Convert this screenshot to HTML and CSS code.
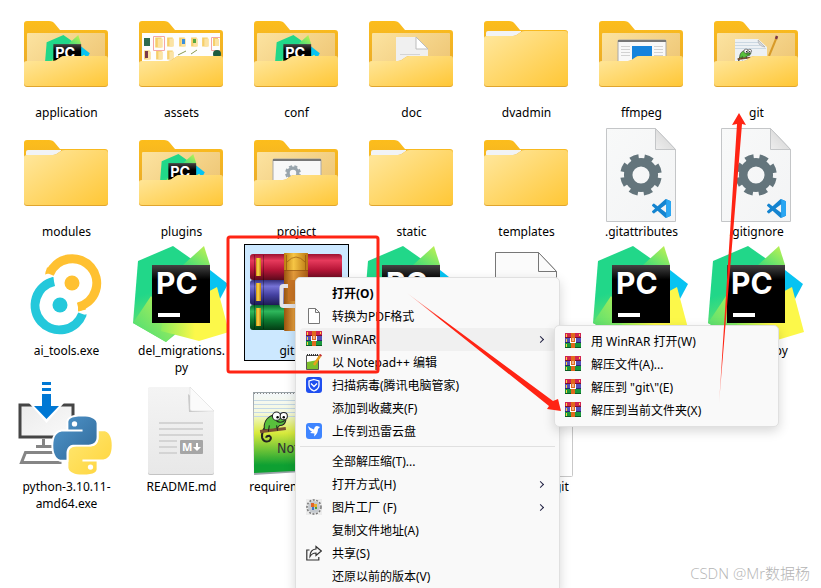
FILE: index.html
```html
<!DOCTYPE html>
<html lang="zh-CN"><head>
  <meta charset="UTF-8"/>
  <meta name="viewport" content="width=device-width,initial-scale=1"/>
  <title>git</title>
  <link rel="stylesheet" href="styles.css">
</head><body>

<!-- shared icon shapes -->
<svg class="sprite" aria-hidden="true">
  <defs>
    <linearGradient id="g-back" x1="0" y1="0" x2="0" y2="1"><stop offset="0" stop-color="#fcbd1c"/><stop offset="1" stop-color="#e8a92c"/></linearGradient>
    <linearGradient id="g-inner" x1="0" y1="0" x2="1" y2="0.6"><stop offset="0" stop-color="#fce3a0"/><stop offset="1" stop-color="#efc878"/></linearGradient>
    <linearGradient id="g-front" x1="0" y1="0" x2="1" y2="1"><stop offset="0" stop-color="#ffe8a0"/><stop offset="1" stop-color="#ffc736"/></linearGradient>
    <linearGradient id="g-page" x1="0" y1="0" x2="1" y2="1"><stop offset="0" stop-color="#f8f9f9"/><stop offset="1" stop-color="#f3f4f5"/></linearGradient>
    <linearGradient id="g-fold" x1="0" y1="1" x2="1" y2="0"><stop offset="0" stop-color="#eeeeee"/><stop offset="1" stop-color="#cfcfcf"/></linearGradient>
    <linearGradient id="g-black" x1="0" y1="0" x2="0" y2="1"><stop offset="0" stop-color="#444"/><stop offset="0.25" stop-color="#000"/></linearGradient>
    <linearGradient id="g-pcgreen" x1="0" y1="0" x2="0.3" y2="1"><stop offset="0.5" stop-color="#21d789"/><stop offset="0.85" stop-color="#6be36c"/></linearGradient>
    <linearGradient id="g-lime" x1="0" y1="1" x2="1" y2="0"><stop offset="0" stop-color="#3fdc78"/><stop offset="1" stop-color="#c8f350"/></linearGradient>
    <linearGradient id="g-yellow" x1="0" y1="0" x2="1" y2="0"><stop offset="0" stop-color="#8cec5c"/><stop offset="0.5" stop-color="#fcf84a"/></linearGradient>
    <linearGradient id="g-pyblue" x1="0" y1="0" x2="1" y2="1"><stop offset="0" stop-color="#5096cc"/><stop offset="1" stop-color="#306998"/></linearGradient>
    <linearGradient id="g-pyyellow" x1="1" y1="1" x2="0" y2="0"><stop offset="0" stop-color="#ffe873"/><stop offset="1" stop-color="#ffd43b"/></linearGradient>
    <linearGradient id="g-red" x1="0" y1="0" x2="0" y2="1"><stop offset="0" stop-color="#9c1230"/><stop offset="0.25" stop-color="#e63a5c"/><stop offset="0.6" stop-color="#b81638"/><stop offset="1" stop-color="#5c0a1c"/></linearGradient>
    <linearGradient id="g-purple" x1="0" y1="0" x2="0" y2="1"><stop offset="0" stop-color="#33307c"/><stop offset="0.25" stop-color="#7572d6"/><stop offset="0.6" stop-color="#4440a0"/><stop offset="1" stop-color="#1e1b55"/></linearGradient>
    <linearGradient id="g-green" x1="0" y1="0" x2="0" y2="1"><stop offset="0" stop-color="#0b6a2c"/><stop offset="0.25" stop-color="#2fb85c"/><stop offset="0.6" stop-color="#0c7a30"/><stop offset="1" stop-color="#033c14"/></linearGradient>
    <linearGradient id="g-belt" x1="0" y1="0" x2="1" y2="0"><stop offset="0" stop-color="#9a5410"/><stop offset="0.4" stop-color="#e29a3a"/><stop offset="1" stop-color="#a85c14"/></linearGradient>
    <linearGradient id="g-gold" x1="0" y1="0" x2="1" y2="0"><stop offset="0" stop-color="#c88c10"/><stop offset="0.4" stop-color="#ffd84a"/><stop offset="1" stop-color="#c08010"/></linearGradient>
    <linearGradient id="g-note" x1="0" y1="0" x2="0" y2="1"><stop offset="0" stop-color="#f4f8fb"/><stop offset="0.25" stop-color="#f6f9dc"/><stop offset="0.5" stop-color="#d8ea3c"/><stop offset="0.9" stop-color="#0ea032"/></linearGradient>
    <linearGradient id="g-md" x1="0" y1="0" x2="0" y2="1"><stop offset="0" stop-color="#f4f4f4"/><stop offset="1" stop-color="#e8e8e8"/></linearGradient>
    <linearGradient id="g-screen" x1="0" y1="0" x2="1" y2="1"><stop offset="0" stop-color="#ebebeb"/><stop offset="1" stop-color="#fafafa"/></linearGradient>
  </defs>

  <symbol id="folder-back" viewBox="0 0 97 96">
    <path fill="url(#g-back)" d="M6 16q0-3 3-3h22q4 0 6 3l5 6h45q3 0 3 3v40H6z"/>
    <rect x="9" y="25" width="78" height="40" rx="1" fill="url(#g-inner)"/>
  </symbol>
  <symbol id="folder-front" viewBox="0 0 97 96">
    <path fill="#e0a52e" d="M6 55q0-2 3-2h26q3 0 5-2l3-2q1-1 4-1h41q2 0 2 3v25q0 3-3 3H9q-3 0-3-3z"/>
    <path fill="url(#g-front)" d="M6 55q0-2 3-2h26q3 0 5-2l3-2q1-1 4-1h41q2 0 2 3v24q0 3-3 3H9q-3 0-3-3z"/>
  </symbol>
  <symbol id="folder" viewBox="0 0 97 96">
    <path fill="url(#g-back)" d="M6 16q0-3 3-3h22q4 0 6 3l5 6h45q3 0 3 3v40H6z"/>
    <path fill="#f1f3f6" d="M8 25q0-2 2-2h33v6H8z"/>
    <path fill="#e0a52e" d="M6 30q0-2 3-2h26q3 0 5-2l3-2q1-1 4-1h40q3 0 3 3v50q0 3-3 3H9q-3 0-3-3z"/>
    <path fill="url(#g-front)" d="M6 30q0-2 3-2h26q3 0 5-2l3-2q1-1 4-1h40q3 0 3 3v49q0 3-3 3H9q-3 0-3-3z"/>
  </symbol>
  <symbol id="pycharm" viewBox="0 0 97 96">
    <path fill="#07c3f2" d="M60 19L77 24L95 38L80 66L50 60z"/>
    <path fill="url(#g-pcgreen)" d="M40 0L5 15L0 77L33 96L77 60V26z"/>
    <path fill="url(#g-lime)" d="M18 50L0 77L33 96L44 84z"/>
    <path fill="url(#g-lime)" d="M71 0L50 19H77z"/>
    <path fill="url(#g-yellow)" d="M84 41L96 86L66 95L28 85L30 70z"/>
    <rect x="19" y="19" width="58" height="58" fill="url(#g-black)"/>
    <rect x="25" y="67" width="22" height="4" fill="#fff"/>
    <text x="23" y="48" class="pc-text">PC</text>
  </symbol>
  <symbol id="folder-pc" viewBox="0 0 97 96">
    <use href="#folder-back"/>
    <use href="#pycharm" x="26" y="27" width="47" height="46"/>
    <use href="#folder-front"/>
  </symbol>
  <symbol id="gear" viewBox="0 0 42 42">
    <circle cx="21" cy="21" r="12.8" fill="none" stroke="currentColor" stroke-width="8.5"/>
    <circle cx="21" cy="21" r="18.3" fill="none" stroke="currentColor" stroke-width="5" stroke-dasharray="8.4 5.97" stroke-dashoffset="-3"/>
  </symbol>
  <symbol id="file-config" viewBox="0 0 97 96">
    <path fill="url(#g-page)" stroke="#c4c6c8" d="M13.500 1.500H62.500L82.500 22.500V94.500H13.500z"/>
    <path fill="url(#g-fold)" stroke="#c4c6c8" d="M62.500 1.500V22.500H82.500z"/>
    <use href="#gear" x="27" y="27" width="42" height="42" color="#64757c"/>
    <svg x="59" y="72" width="19" height="19" viewBox="0 0 24 24">
      <path fill="#1484d0" d="M23.15 2.587L18.21.21a1.494 1.494 0 0 0-1.705.29l-9.46 8.63-4.12-3.128a.999.999 0 0 0-1.276.057L.327 7.261A1 1 0 0 0 .326 8.74L3.899 12 .326 15.26a1 1 0 0 0 .001 1.479L1.65 17.94a.999.999 0 0 0 1.276.057l4.12-3.128 9.46 8.63a1.492 1.492 0 0 0 1.704.29l4.942-2.377A1.5 1.5 0 0 0 24 20.06V3.939a1.5 1.5 0 0 0-.85-1.352zm-5.146 14.861L10.826 12l7.178-5.448v10.896z"/>
      <path fill="#2aa6f2" d="M18 .2L23.200 2.600Q24 3 24 4V20Q24 21 23.200 21.400L18 23.800z"/>
    </svg>
  </symbol>
  <symbol id="winrar-s" viewBox="0 0 16 16">
    <rect x="0" y="0" width="16" height="5" fill="#d0254f"/>
    <rect x="0" y="4" width="16" height="1" fill="#7a0f2a"/>
    <rect x="0" y="5" width="16" height="5" fill="#5350b8"/>
    <rect x="0" y="9" width="16" height="1" fill="#2a2870"/>
    <rect x="0" y="10" width="16" height="5" fill="#18983c"/>
    <rect x="0" y="14" width="16" height="1" fill="#0a5c22"/>
    <path fill="#ffd23c" d="M1 1h1v3H1zM1 6h1v3H1zM1 11h1v3H1zM14 1h1v2h-1z"/>
    <rect x="6" y="0" width="4" height="15" fill="#e0691c"/>
    <path fill="#fff" d="M5 5h1v4h4V5h1v5H5zM7.500 5h1v3h-1z"/>
  </symbol>
  <symbol id="python" viewBox="-1 -1 26 26">
    <path class="py-half" fill="url(#g-pyyellow)" transform="rotate(180 12 12)" d="M14.25.18l.9.2.73.26.59.3.45.32.34.34.25.34.16.33.1.3.04.26.02.2-.01.13V8.5l-.05.63-.13.55-.21.46-.26.38-.3.31-.33.25-.35.19-.35.14-.33.1-.3.07-.26.04-.21.02H8.77l-.69.05-.59.14-.5.22-.41.27-.33.32-.27.35-.2.36-.15.37-.1.35-.07.32-.04.27-.02.21v3.06H3.17l-.21-.03-.28-.07-.32-.12-.35-.18-.36-.26-.36-.36-.35-.46-.32-.59-.28-.73-.21-.88-.14-1.05-.05-1.23.06-1.22.16-1.04.24-.87.32-.71.36-.57.4-.44.42-.33.42-.24.4-.16.36-.1.32-.05.24-.01h.16l.06.01h8.16v-.83H6.18l-.01-2.75-.02-.37.05-.34.11-.31.17-.28.25-.26.31-.23.38-.2.44-.18.51-.15.58-.12.64-.1.71-.06.77-.04.84-.02 1.27.05z"/>
    <path class="py-half" fill="url(#g-pyblue)" d="M14.25.18l.9.2.73.26.59.3.45.32.34.34.25.34.16.33.1.3.04.26.02.2-.01.13V8.5l-.05.63-.13.55-.21.46-.26.38-.3.31-.33.25-.35.19-.35.14-.33.1-.3.07-.26.04-.21.02H8.77l-.69.05-.59.14-.5.22-.41.27-.33.32-.27.35-.2.36-.15.37-.1.35-.07.32-.04.27-.02.21v3.06H3.17l-.21-.03-.28-.07-.32-.12-.35-.18-.36-.26-.36-.36-.35-.46-.32-.59-.28-.73-.21-.88-.14-1.05-.05-1.23.06-1.22.16-1.04.24-.87.32-.71.36-.57.4-.44.42-.33.42-.24.4-.16.36-.1.32-.05.24-.01h.16l.06.01h8.16v-.83H6.18l-.01-2.75-.02-.37.05-.34.11-.31.17-.28.25-.26.31-.23.38-.2.44-.18.51-.15.58-.12.64-.1.71-.06.77-.04.84-.02 1.27.05z"/>
    <circle cx="8.700" cy="3.100" r="1.100" fill="#fff"/><circle cx="15.300" cy="20.900" r="1.100" fill="#fff"/>
  </symbol>
  <symbol id="mini" viewBox="0 0 8 10">
    <rect x="1" y="1" width="5" height="8" fill="#f6cf6a"/><rect x="3" y="2" width="4" height="7" fill="#fbe3a4"/>
  </symbol>
  <symbol id="chameleon" viewBox="0 0 30 34">
    <path fill="none" stroke="#222" stroke-width="2" d="M7 16q-5 5-4 11q2 5 7 3q3-3 0-5q-3 0-3 2"/>
    <path fill="#58c03c" stroke="#222" d="M5 19q-1-9 6-13q6-3 10-2l5 6q-1 5-6 5q-3 4-8 4z"/>
    <path fill="none" stroke="#7a5230" stroke-width="3" d="M1 21L26 18"/>
    <path fill="none" stroke="#222" stroke-width="1" d="M10 15l-1 6M17 15l1 5M17 11q5 2 8-1"/>
    <circle cx="17" cy="6" r="4" fill="#fff" stroke="#222"/><circle cx="24" cy="6" r="3.500" fill="#fff" stroke="#222"/>
    <circle cx="18" cy="7" r="1.200"/><circle cx="24" cy="7" r="1.200"/>
  </symbol>
</svg>

<div class="desktop">
  <ul class="files">
    <li class="file"><svg class="icon"><use href="#folder-pc"/></svg><span>application</span></li>
    <li class="file">
      <svg class="icon" viewBox="0 0 97 96">
        <use href="#folder-back"/>
        <rect x="9" y="25" width="78" height="36" fill="#fdfdfd"/>
        <rect x="11" y="30" width="6" height="8" fill="#2e6b50"/>
        <use href="#mini" x="21" y="28" width="10" height="13"/><use href="#mini" x="33" y="28" width="9" height="12"/>
        <use href="#mini" x="45" y="28" width="9" height="12"/><rect x="49" y="31" width="3" height="5" fill="#3a8fdc"/>
        <use href="#mini" x="57" y="28" width="9" height="12"/><rect x="60" y="31" width="3" height="4" fill="#58a840"/>
        <use href="#mini" x="68" y="28" width="9" height="12"/><use href="#mini" x="79" y="28" width="8" height="12"/>
        <use href="#mini" x="10" y="41" width="9" height="12"/><rect x="12" y="43" width="3" height="7" fill="#7b3a4a"/>
        <use href="#mini" x="22" y="41" width="9" height="12"/><use href="#mini" x="33" y="41" width="9" height="12"/>
        <path fill="none" stroke="#f4a6a6" d="M20.500 28.500h11v14h-11zM87 29.500h-8.500v13H87"/>
        <path fill="none" stroke="#8a9a50" d="M45 47l8-4M58 46l6-4"/>
        <circle cx="84" cy="46" r="4" fill="#1d5c40"/>
        <use href="#folder-front"/>
      </svg><span>assets</span></li>
    <li class="file"><svg class="icon"><use href="#folder-pc"/></svg><span>conf</span></li>
    <li class="file">
      <svg class="icon" viewBox="0 0 97 96">
        <use href="#folder-back"/>
        <path fill="#f0f0f0" d="M33 29H53L65 41V60H33z"/><path fill="#fff" stroke="#bdbdbd" d="M53 29V41H65z"/>
        <path stroke="#d4d4d4" d="M37 46.500h20"/>
        <use href="#folder-front"/>
      </svg><span>doc</span></li>
    <li class="file"><svg class="icon"><use href="#folder"/></svg><span>dvadmin</span></li>
    <li class="file">
      <svg class="icon" viewBox="0 0 97 96">
        <use href="#folder-back"/>
        <rect x="25" y="32" width="48" height="30" rx="1" fill="#f8f8f8" stroke="#a8a8a8"/><rect x="25" y="32" width="48" height="2" fill="#777"/>
        <path stroke="#d2d2d2" d="M28 38.500h9M28 41.500h9M28 44.500h9M28 47.500h9M61 38.500h9M61 41.500h9M61 44.500h9M61 47.500h9"/>
        <rect x="39" y="38" width="20" height="14" fill="#1583dc"/>
        <use href="#folder-front"/>
      </svg><span>ffmpeg</span></li>
    <li class="file">
      <svg class="icon" viewBox="0 0 97 96">
        <use href="#folder-back"/>
        <path fill="#edf1f4" d="M27 31H50L59 39V60H27z"/><path stroke="#cbd8e2" d="M27 34.500h24M27 37.500h25M27 40.500h31"/>
        <path fill="#d6dade" stroke="#999" stroke-width="0.500" d="M50 32q0 6 7 7z"/>
        <use href="#chameleon" x="28" y="40" width="18" height="18"/>
        <path stroke="#d89a28" stroke-width="2" d="M61 48L68 31"/><path stroke="#7a3440" stroke-width="2.500" d="M68 31l1-3"/>
        <use href="#folder-front"/>
      </svg><span>git</span></li>

    <li class="file"><svg class="icon"><use href="#folder"/></svg><span>modules</span></li>
    <li class="file"><svg class="icon"><use href="#folder-pc"/></svg><span>plugins</span></li>
    <li class="file">
      <svg class="icon" viewBox="0 0 97 96">
        <use href="#folder-back"/>
        <rect x="25" y="32" width="48" height="30" rx="1" fill="#f8f8f8" stroke="#a8a8a8"/><rect x="25" y="32" width="48" height="2" fill="#777"/>
        <use href="#gear" x="37" y="38" width="16" height="16" color="#98a4ac"/>
        <use href="#folder-front"/>
      </svg><span>project</span></li>
    <li class="file"><svg class="icon"><use href="#folder"/></svg><span>static</span></li>
    <li class="file"><svg class="icon"><use href="#folder"/></svg><span>templates</span></li>
    <li class="file"><svg class="icon"><use href="#file-config"/></svg><span>.gitattributes</span></li>
    <li class="file"><svg class="icon"><use href="#file-config"/></svg><span>.gitignore</span></li>

    <li class="file">
      <svg class="icon" viewBox="0 0 97 96" fill="none" stroke-width="9">
        <path stroke="#ffc131" d="M31.500 28A24.500 24.500 0 1 1 60 61"/>
        <path stroke="#24c8db" d="M36 35.500A24.500 24.500 0 1 0 64.500 68"/>
        <path fill="#ffc131" d="M27 28.500l10-3v-4h-8zM60 65.500v-9h4l4 7z"/>
        <path fill="#24c8db" d="M35.500 31v9l-5-2v-5zM69 68l-9 3 2 5z"/>
        <circle cx="54" cy="37" r="7.500" fill="#ffc131"/><circle cx="42" cy="59" r="7.500" fill="#24c8db"/>
      </svg><span>ai_tools.exe</span></li>
    <li class="file"><svg class="icon"><use href="#pycharm"/></svg><span>del_migrations.<br>py</span></li>
    <li class="file selected">
      <svg class="icon" viewBox="0 0 97 96">
        <rect x="2" y="8" width="92" height="26" rx="3" fill="url(#g-red)"/>
        <rect x="2" y="34" width="92" height="25" rx="3" fill="url(#g-purple)"/>
        <rect x="2" y="59" width="92" height="25" rx="3" fill="url(#g-green)"/>
        <path fill="url(#g-gold)" d="M8 12h5v18H8zM8 37h5v18H8zM8 62h5v18H8z"/>
        <path fill="none" stroke="#000" stroke-opacity="0.300" d="M6.500 9v74M15.500 9v74"/>
        <rect x="36" y="7" width="24" height="78" rx="1" fill="url(#g-belt)"/>
        <rect x="36" y="7" width="24" height="17" fill="url(#g-gold)" fill-opacity="0.700"/>
        <path fill="none" stroke="#8a4c0c" stroke-opacity="0.600" d="M36 24.500h24M38.500 24V9M57.500 24V9M39 16q9-10 18 0"/>
        <rect x="33.500" y="40" width="30" height="20" rx="2" fill="none" stroke="#e4e4e8" stroke-width="4"/>
        <rect x="40" y="34" width="16" height="21" fill="#c87424"/>
      </svg><span>git.zip</span></li>
    <li class="file"><svg class="icon"><use href="#pycharm"/></svg></li>
    <li class="file">
      <svg class="icon" viewBox="0 0 97 96" fill="#fbfbfb" stroke="#777">
        <path d="M17.500 6.500H60.500L78.500 25.500V90.500H17.500z"/><path d="M60.500 6.500V25.500H78.500z"/>
      </svg></li>
    <li class="file"><svg class="icon"><use href="#pycharm"/></svg></li>
    <li class="file"><svg class="icon"><use href="#pycharm"/></svg><span>manage.py</span></li>

    <li class="file">
      <svg class="icon" viewBox="0 0 97 96">
        <rect x="2" y="23" width="53" height="32" fill="url(#g-screen)" stroke="#454545" stroke-width="3"/>
        <path fill="none" stroke="#858585" stroke-width="3" d="M25.500 57v7M18 64.500h20M7.500 70.500H42V80.500H3.500z"/>
        <path fill="#fff" d="M21 10h15v11h10L28.500 41L11 21h10z"/>
        <path fill="#0078d4" d="M24 0h9v3h-9zM24 6h9v3h-9zM24 12h9v12h8L28.500 37L16 24h8z"/>
        <use href="#python" x="33" y="32" width="63" height="63"/>
      </svg><span>python-3.10.11-<br>amd64.exe</span></li>
    <li class="file">
      <svg class="icon" viewBox="0 0 97 96">
        <path fill="#c4c4c4" d="M15 8q0-2 2-2H57L81 30V91q0 2-2 2H17q-2 0-2-2z"/>
        <path fill="url(#g-md)" d="M15 7q0-2 2-2H57L81 29V90q0 2-2 2H17q-2 0-2-2z"/>
        <path fill="#c8c8c8" d="M55 12L56 30Q60 30 76 29z"/>
        <path fill="#fbfbfb" stroke="#d4d4d4" stroke-width="0.500" d="M57 5V27q0 2 2 2H81z"/>
        <path stroke="#d4d4d4" stroke-width="2" d="M26 41h44M26 47h44M26 53h44M26 59h18M26 65h18M26 71h18"/>
        <rect x="47" y="58" width="23" height="14" rx="1" fill="#a6a6a6"/>
        <text x="49" y="69" class="md-text">M</text>
        <path fill="#fff" d="M63 61h2v4h3l-4 4-4-4h3z"/>
      </svg><span>README.md</span></li>
    <li class="file">
      <svg class="icon" viewBox="0 0 97 96">
        <path fill="#9aa3a8" d="M5 10H85V88L6 93z"/>
        <path fill="url(#g-note)" d="M6 11H85V87L6 91z"/>
        <path stroke="#c4d8e6" d="M6 18.500h78M6 22.500h78M6 26.500h78M6 30.500h78M6 34.500h78"/>
        <path stroke="#888" stroke-dasharray="1 2" d="M6 11.500h78"/>
        <use href="#chameleon" x="11" y="28" width="31" height="35"/>
        <text x="29" y="71" class="note-text">Notepad</text>
      </svg><span>requirements.txt</span></li>
    <li class="file"></li>
    <li class="file">
      <svg class="icon" viewBox="0 0 97 96" fill="#fff" stroke="#c8c8c8"><rect x="2.500" y="2.500" width="92" height="92" rx="1"/></svg><span>updates_by_git</span></li>
  </ul>

  <div class="menu menu-main" role="menu">
    <button class="item default" role="menuitem">打开(O)</button>
    <button class="item" role="menuitem"><svg viewBox="0 0 16 16" fill="#fff" stroke="#777"><path d="M2.500 .5h7l4 4v11h-11zM9.500 .5v4h4"/></svg>转换为PDF格式</button>
    <button class="item active" role="menuitem"><svg><use href="#winrar-s"/></svg>WinRAR<i class="arrow"></i></button>
    <button class="item" role="menuitem"><svg viewBox="0 0 16 16"><path fill="#fff" stroke="#555" d="M.5 1.500h12v14H.5z"/><path fill="#7cc02c" d="M1 8l11-2v9H1z"/><path stroke="#333" stroke-dasharray="1 1" stroke-width="2" d="M1 1h11"/><path stroke="#e8a11c" stroke-width="2.500" d="M8 11l6-9"/><path stroke="#c02c2c" stroke-width="2.500" d="M14 2l1-1.500"/></svg>以 Notepad++ 编辑</button>
    <button class="item" role="menuitem"><svg viewBox="0 0 16 16"><rect width="16" height="16" rx="3" fill="#1f4ff0"/><path fill="none" stroke="#fff" stroke-width="1.300" d="M8 2.500l5 1.500v4q0 4-5 6q-5-2-5-6V4z"/><path fill="none" stroke="#fff" stroke-width="1.300" d="M5 6.500l3 3 3-3"/></svg>扫描病毒(腾讯电脑管家)</button>
    <button class="item" role="menuitem">添加到收藏夹(F)</button>
    <button class="item" role="menuitem"><svg viewBox="0 0 16 16"><rect width="16" height="16" rx="3" fill="#3f85ff"/><path fill="#fff" d="M2 3q3 3 6 3.500Q8.500 3 11 3l3 1-2 2q0 5-4 7.500l.5-3L4 10l2-1.500Q3 7.500 2 3z"/></svg>上传到迅雷云盘</button>
    <hr>
    <button class="item" role="menuitem">全部解压缩(T)...</button>
    <button class="item" role="menuitem">打开方式(H)<i class="arrow"></i></button>
    <button class="item" role="menuitem"><svg viewBox="0 0 16 16"><rect width="16" height="16" fill="#ececec"/><circle cx="8" cy="8" r="6" fill="#c4c9ce"/><circle cx="8" cy="8" r="7" fill="none" stroke="#777" stroke-width="1.500" stroke-dasharray="2 1.500"/><path fill="#e0642c" d="M5 4h3v4H5z"/><path fill="#e8b030" d="M8 5h3v3H8z"/><path fill="#4c9c3c" d="M9 8h2v2H9z"/><path fill="#3c74c8" d="M6 8h2v3H6z"/></svg>图片工厂 (F)<i class="arrow"></i></button>
    <button class="item" role="menuitem">复制文件地址(A)</button>
    <button class="item" role="menuitem"><svg viewBox="0 0 16 16" fill="none" stroke="#333" stroke-width="1.200"><path d="M3.500 5H.8v10h12v-3"/><path d="M10 1.500l5.300 4.500-5.300 4.500V8q-4 0-6 3.500q0-7 6-7.500z"/></svg>共享(S)</button>
    <button class="item" role="menuitem">还原以前的版本(V)</button>
  </div>

  <div class="menu menu-sub" role="menu">
    <button class="item" role="menuitem"><svg><use href="#winrar-s"/></svg>用 WinRAR 打开(W)</button>
    <button class="item" role="menuitem"><svg><use href="#winrar-s"/></svg>解压文件(A)...</button>
    <button class="item" role="menuitem"><svg><use href="#winrar-s"/></svg>解压到 "git\"(E)</button>
    <button class="item" role="menuitem"><svg><use href="#winrar-s"/></svg>解压到当前文件夹(X)</button>
  </div>

  <!-- red marks drawn over everything -->
  <svg class="marks" width="821" height="588" viewBox="0 0 821 588" aria-hidden="true">
    <defs>
      <linearGradient id="fade1" gradientUnits="userSpaceOnUse" x1="408" y1="294" x2="440" y2="318"><stop offset="0" stop-color="#ff2414" stop-opacity="0.200"/><stop offset="1" stop-color="#ff2414"/></linearGradient>
      <linearGradient id="fade2" gradientUnits="userSpaceOnUse" x1="719" y1="404" x2="721" y2="360"><stop offset="0" stop-color="#ff2414" stop-opacity="0.200"/><stop offset="1" stop-color="#ff2414"/></linearGradient>
    </defs>
    <rect x="228" y="237" width="150" height="135" rx="2" fill="none" stroke="#ff2414" stroke-width="3"/>
    <path fill="url(#fade1)" d="M407 293L553 401L558 399L561 411L547 409L549 406z"/>
    <path fill="url(#fade2)" d="M739 113L746 125L742 124L719 404L737 124L732 125z"/>
  </svg>
  <div class="watermark">CSDN @Mr数据杨</div>
</div>
</body></html>
```
FILE: styles.css
```css
* {box-sizing:border-box}
body {margin:0;background:#fff;color:#000;
      font:12px/17px 'Noto Sans','Noto Sans CJK SC',sans-serif}
.sprite {position:absolute;width:0;height:0}
.desktop {position:relative;height:100vh;overflow:hidden}

.files {display:grid;grid-template-columns:repeat(auto-fill,105px);gap:2px 10px;
        margin:0;padding:6px 0 0 14px;list-style:none;align-items:start}
.file {display:flex;flex-direction:column;align-items:center;text-align:center;
       padding:1px;border:1px solid transparent}
.file.selected {background:#cce8ff;border-color:#000}
.file span {white-space:nowrap}
.icon {width:97px;height:96px;flex:none}
.pc-text {font:700 30px Inter,sans-serif;fill:#fff}
.md-text {font:700 11px 'Open Sans',sans-serif;fill:#fff}
.note-text {font:14px 'DejaVu Sans Condensed','Liberation Sans',sans-serif;fill:#333}
.py-half {stroke:#fff;stroke-width:1.6px;paint-order:stroke}

.menu {position:absolute;display:flex;flex-direction:column;padding:4px;
       background:#f9f9f9;border:1px solid #e0e0e0;border-radius:5px;
       box-shadow:0 4px 12px rgba(0,0,0,0.16)}
.menu-main {left:295px;top:277px;width:265px}
.menu-sub {left:554px;top:325px;width:225px}
.item {display:flex;align-items:center;position:relative;height:23px;flex:none;
       margin:0;padding:0 8px 0 32px;border:0;border-radius:4px;
       background:none;color:#000;font:inherit;text-align:left;white-space:pre}
.item svg {position:absolute;left:6px;top:3px;width:16px;height:16px}
.item.default {font-weight:bold}
.item.active {background:#f0f0f0}
.arrow {width:5px;height:5px;margin-left:auto;margin-right:4px;
        border:solid #224;border-width:1px 1px 0 0;transform:rotate(45deg)}
.menu hr {width:100%;height:1px;margin:3px 0;border:0;background:#e0e0e0;flex:none}

.marks {position:absolute;left:0;top:0;pointer-events:none}
.watermark {position:absolute;right:11px;bottom:4px;color:#b4b4b4;
            font:300 15px/22px 'Open Sans','Noto Sans CJK SC',sans-serif}
```
